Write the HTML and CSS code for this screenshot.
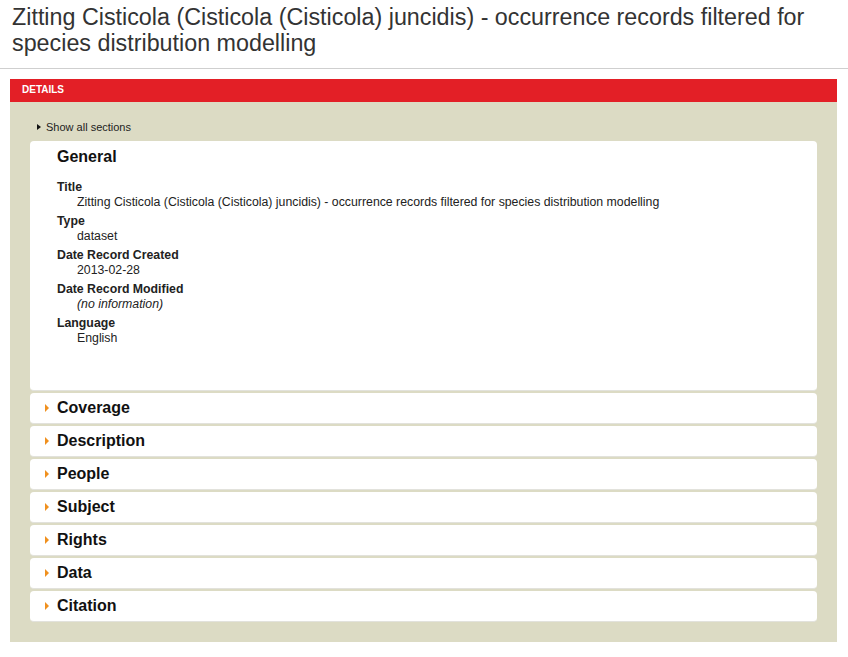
FILE: index.html
```html
<!DOCTYPE html>
<html>
<head>
<meta charset="utf-8">
<link rel="stylesheet" href="styles.css">
</head>
<body>
<h1 class="page-title">Zitting Cisticola (Cisticola (Cisticola) juncidis) - occurrence records filtered for species distribution modelling</h1>
<hr class="rule">
<div class="details">
  <div class="details-bar">DETAILS</div>
  <div class="details-body">
    <div class="show-all"><span class="tri-black"></span>Show all sections</div>
    <div class="card card-open">
      <h2 class="card-title">General</h2>
      <dl class="fields">
        <dt>Title</dt>
        <dd>Zitting Cisticola (Cisticola (Cisticola) juncidis) - occurrence records filtered for species distribution modelling</dd>
        <dt>Type</dt>
        <dd>dataset</dd>
        <dt>Date Record Created</dt>
        <dd>2013-02-28</dd>
        <dt>Date Record Modified</dt>
        <dd><em>(no information)</em></dd>
        <dt>Language</dt>
        <dd>English</dd>
      </dl>
    </div>
    <div class="card card-closed"><span class="tri-orange"></span><span class="card-title-sm">Coverage</span></div>
    <div class="card card-closed"><span class="tri-orange"></span><span class="card-title-sm">Description</span></div>
    <div class="card card-closed"><span class="tri-orange"></span><span class="card-title-sm">People</span></div>
    <div class="card card-closed"><span class="tri-orange"></span><span class="card-title-sm">Subject</span></div>
    <div class="card card-closed"><span class="tri-orange"></span><span class="card-title-sm">Rights</span></div>
    <div class="card card-closed"><span class="tri-orange"></span><span class="card-title-sm">Data</span></div>
    <div class="card card-closed"><span class="tri-orange"></span><span class="card-title-sm">Citation</span></div>
  </div>
</div>
</body>
</html>
```
FILE: styles.css
```css
html, body {
  margin: 0;
  padding: 0;
  background: #fff;
  font-family: "Liberation Sans", Arial, Helvetica, sans-serif;
  color: #222;
}
.page-title {
  margin: 0;
  padding: 4px 12px 0 12px;
  font-size: 23.3px;
  line-height: 26px;
  font-weight: normal;
  color: #333;
  width: 810px;
}
.rule {
  margin: 12px 0 10px 0;
  border: 0;
  border-top: 1px solid #cfcfcf;
  height: 0;
}
.details {
  margin: 0 11px 0 10px;
}
.details-bar {
  background: #e31f26;
  color: #fff;
  font-size: 10px;
  font-weight: bold;
  height: 23px;
  line-height: 22px;
  padding-left: 12px;
}
.details-body {
  background: #dcdbc4;
  padding: 17px 20px 20px 20px;
  display: flex;
  flex-direction: column;
  gap: 2px;
}
.show-all {
  font-size: 11px;
  color: #222;
  line-height: 16px;
  display: flex;
  align-items: center;
  padding-left: 7px;
  margin-bottom: 4px;
}
.tri-black {
  width: 0;
  height: 0;
  border-top: 3.5px solid transparent;
  border-bottom: 3.5px solid transparent;
  border-left: 4px solid #111;
  margin-right: 5px;
}
.card {
  background: #fff;
  border-radius: 4px;
  border-bottom: 1px solid #e2e2dc;
}
.card-open {
  height: 250px;
  padding: 6px 27px 0 27px;
  box-sizing: border-box;
}
.card-title {
  margin: 0;
  font-size: 16px;
  font-weight: bold;
  line-height: 20px;
  color: #111;
}
.fields {
  margin: 13px 0 0 0;
  font-size: 12.3px;
  line-height: 15px;
}
.fields dt {
  font-weight: bold;
  color: #222;
  margin-top: 4px;
}
.fields dt:first-child {
  margin-top: 0;
}
.fields dd {
  margin: 0 0 0 20px;
  color: #222;
}
.card-closed {
  height: 31px;
  box-sizing: border-box;
  display: flex;
  align-items: center;
  padding-left: 15px;
}
.tri-orange {
  width: 0;
  height: 0;
  border-top: 4px solid transparent;
  border-bottom: 4px solid transparent;
  border-left: 4px solid #f0901e;
  margin-right: 8px;
}
.card-title-sm {
  font-size: 16px;
  font-weight: bold;
  color: #111;
}
```
